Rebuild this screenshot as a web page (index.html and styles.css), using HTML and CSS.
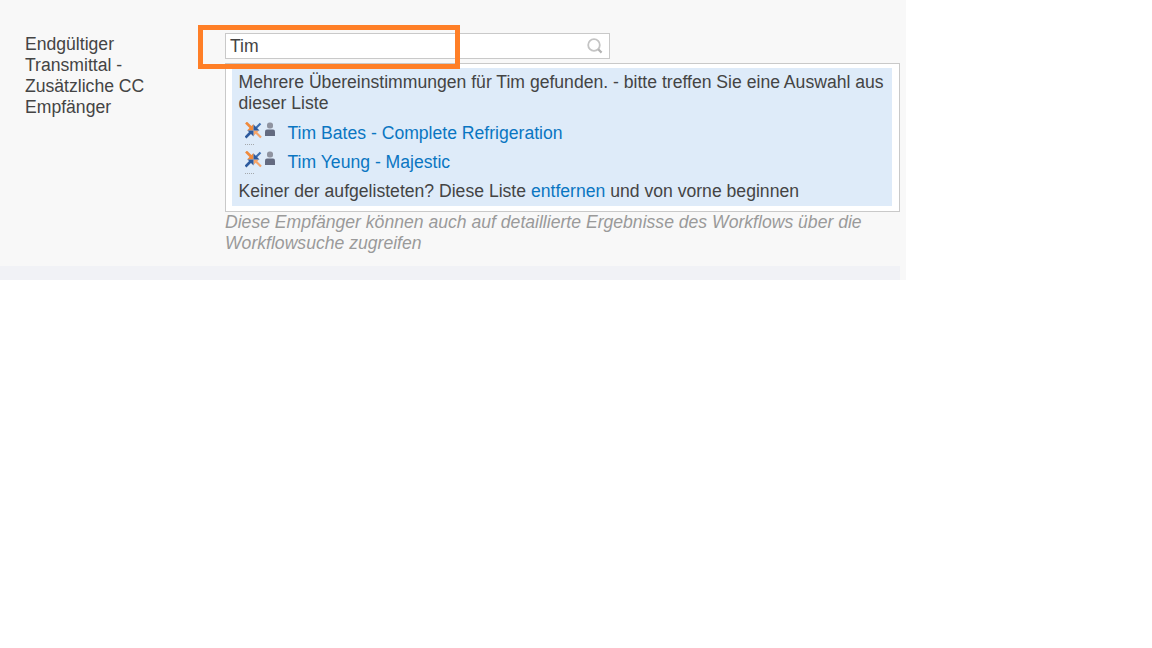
FILE: index.html
```html
<!DOCTYPE html>
<html lang="de">
<head>
<meta charset="utf-8">
<title>Endgültiger Transmittal</title>
<link rel="stylesheet" href="styles.css">
</head>
<body>
<div class="panel">
  <div class="row">
    <div class="label">Endgültiger Transmittal - Zusätzliche CC Empfänger</div>
    <div class="field">
      <div class="search">
        <span class="search-text">Tim</span>
        <svg class="search-icon" width="18" height="18" viewBox="0 0 18 18"><circle cx="8" cy="8" r="5.8" fill="none" stroke="#c4c4c4" stroke-width="1.8"/><path d="M12.2 12.2L15.6 15.6" stroke="#b4b4b4" stroke-width="2.2" fill="none"/></svg>
      </div>
      <div class="results">
        <div class="results-inner">
          <p class="msg">Mehrere Übereinstimmungen für Tim gefunden. - bitte treffen Sie eine Auswahl aus dieser Liste</p>
          <div class="match">
            <svg class="match-icon" width="32" height="26" viewBox="0 0 32 26">
              <path d="M1 0.5L6 5.5" stroke="#f08a3c" stroke-width="2.6"/><path d="M8.5 2V8.5H2Z" fill="#f08a3c"/>
              <path d="M16 15.5L11 10.5" stroke="#f6a468" stroke-width="2.2"/><path d="M8.5 14V8.5H14Z" fill="#f6a468"/>
              <path d="M15.5 1.5L11 6" stroke="#3f6fb0" stroke-width="2.2"/><path d="M8.5 2.5V8.5H14.5Z" fill="#2c5a9e"/>
              <path d="M0.5 15.5L5.5 10.5" stroke="#2c5a9e" stroke-width="2.6"/><path d="M8.5 14.5V8.5H2.5Z" fill="#2c5a9e"/>
              <rect x="22" y="0.5" width="6" height="6" rx="2.5" fill="#8f93a0"/>
              <path d="M20 14V9.5Q20 7.5 22 7.5H28Q30 7.5 30 9.5V14Z" fill="#636a80"/>
              <path d="M0 22.5H9" stroke="#a4a8ac" stroke-width="1" stroke-dasharray="1 1"/>
            </svg>
            <a class="link" href="#">Tim Bates - Complete Refrigeration</a>
          </div>
          <div class="match">
            <svg class="match-icon" width="32" height="26" viewBox="0 0 32 26">
              <path d="M1 0.5L6 5.5" stroke="#f08a3c" stroke-width="2.6"/><path d="M8.5 2V8.5H2Z" fill="#f08a3c"/>
              <path d="M16 15.5L11 10.5" stroke="#f6a468" stroke-width="2.2"/><path d="M8.5 14V8.5H14Z" fill="#f6a468"/>
              <path d="M15.5 1.5L11 6" stroke="#3f6fb0" stroke-width="2.2"/><path d="M8.5 2.5V8.5H14.5Z" fill="#2c5a9e"/>
              <path d="M0.5 15.5L5.5 10.5" stroke="#2c5a9e" stroke-width="2.6"/><path d="M8.5 14.5V8.5H2.5Z" fill="#2c5a9e"/>
              <rect x="22" y="0.5" width="6" height="6" rx="2.5" fill="#8f93a0"/>
              <path d="M20 14V9.5Q20 7.5 22 7.5H28Q30 7.5 30 9.5V14Z" fill="#636a80"/>
              <path d="M0 22.5H9" stroke="#a4a8ac" stroke-width="1" stroke-dasharray="1 1"/>
            </svg>
            <a class="link" href="#">Tim Yeung - Majestic</a>
          </div>
          <p class="msg foot">Keiner der aufgelisteten? Diese Liste <a class="link" href="#">entfernen</a> und von vorne beginnen</p>
        </div>
      </div>
      <p class="hint">Diese Empfänger können auch auf detaillierte Ergebnisse des Workflows über die Workflowsuche zugreifen</p>
    </div>
  </div>
  <div class="strip"></div>
  <div class="highlight"></div>
</div>
</body>
</html>
```
FILE: styles.css
```css
* { box-sizing: border-box; }
html, body { margin: 0; padding: 0; background: #fff; }
body { font-family: "Liberation Sans", Arial, sans-serif; font-size: 17.6px; line-height: 21px; color: #444; }
.panel { position: relative; width: 906px; height: 280px; background: #f8f8f8; display: flex; flex-direction: column; }
.row { display: flex; height: 266px; padding: 33px 6px 0 25px; }
.label { width: 200px; padding: 1px 50px 0 0; }
.field { flex: 1; display: flex; flex-direction: column; min-width: 0; }
.search { width: 385px; height: 26px; background: #fff; border: 1px solid #c9c9c9; display: flex; align-items: center; justify-content: space-between; padding: 0 5px 0 4px; flex: none; }
.search-icon { display: block; }
.results { margin-top: 4px; height: 149px; background: #fff; border: 1px solid #c9c9c9; padding: 4px 7px 5px 6px; flex: none; }
.results-inner { background: #deebf9; height: 138px; padding: 4px 6px 0 6.5px; }
.msg { margin: 0; }
.match { display: flex; align-items: flex-start; height: 29px; padding: 9px 0 0 6.5px; }
.match-icon { flex: none; margin-right: 10.5px; margin-top: -1px; }
.foot { margin-top: 9px; }
.link { color: #0a76c2; text-decoration: none; }
.hint { margin: 0; font-style: italic; color: #9a9a9a; }
.strip { width: 900px; height: 14px; background: #f1f2f6; flex: none; }
.highlight { position: absolute; left: 198px; top: 25px; width: 262px; height: 44px; border: 5px solid #ff7f27; }
```
